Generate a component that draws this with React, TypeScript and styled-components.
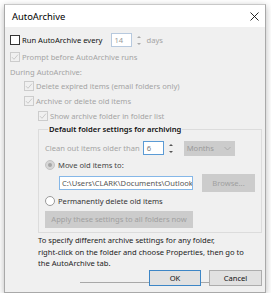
import React from 'react'
import styled, { createGlobalStyle } from 'styled-components'

const GlobalStyle = createGlobalStyle`
  html, body {
    margin: 0;
    padding: 0;
    background: #ffffff;
  }
  body {
    font-family: "Noto Sans", "Open Sans", sans-serif;
    font-size: 7.6px;
    color: #000;
  }
`

const Dialog = styled.div`
  margin: 4px 0 0 4px;
  width: 262px;
  height: 289px;
  box-sizing: border-box;
  border: 1px solid #a9a9a9;
  border-top-color: #c8c8c8;
  background: #f0f0f0;
  box-shadow: 0 2px 7px rgba(0, 0, 0, 0.28);
  display: flex;
  flex-direction: column;
`

const TitleBar = styled.div`
  height: 22px;
  background: #ffffff;
  display: flex;
  align-items: center;
  justify-content: space-between;
  padding: 0 6px 0 7px;
  font-size: 9.4px;
`

const Content = styled.div`
  padding: 5px 3px 0 5px;
  display: flex;
  flex-direction: column;
`

const Row = styled.div<{ $indent?: number; $h?: number }>`
  display: flex;
  align-items: center;
  height: ${(p) => p.$h ?? 15}px;
  padding-left: ${(p) => p.$indent ?? 0}px;
  flex-shrink: 0;
`

const Label = styled.span<{ $disabled?: boolean; $tone?: string }>`
  color: ${(p) => p.$tone ?? (p.$disabled ? '#a4a4a4' : '#111')};
  white-space: nowrap;
`

const Box = styled.span<{ $disabled?: boolean }>`
  width: 10px;
  height: 10px;
  box-sizing: border-box;
  border: 1px solid ${(p) => (p.$disabled ? '#cccccc' : '#333333')};
  background: ${(p) => (p.$disabled ? '#f0f0f0' : '#ffffff')};
  margin-right: 2px;
  display: flex;
  align-items: center;
  justify-content: center;
  flex-shrink: 0;
`

const Radio = styled.span<{ $checked?: boolean }>`
  width: 10px;
  height: 10px;
  box-sizing: border-box;
  border-radius: 50%;
  border: 1px solid ${(p) => (p.$checked ? '#c4c4c4' : '#9a9a9a')};
  background: ${(p) => (p.$checked ? '#d6d6d6' : '#ffffff')};
  margin-right: 3px;
  display: flex;
  align-items: center;
  justify-content: center;
  flex-shrink: 0;
  &::after {
    content: '';
    display: ${(p) => (p.$checked ? 'block' : 'none')};
    width: 4px;
    height: 4px;
    border-radius: 50%;
    background: #a6a6a6;
  }
`

const Spin = styled.div<{ $gap: number }>`
  display: flex;
  align-items: center;
  margin-left: ${(p) => p.$gap}px;
  height: 14px;
`

const SpinInput = styled.div<{ $border: string; $color: string }>`
  width: 21px;
  height: 14px;
  box-sizing: border-box;
  border: 1px solid ${(p) => p.$border};
  background: #ffffff;
  color: ${(p) => p.$color};
  padding-left: 3px;
  display: flex;
  align-items: center;
`

const SpinArrows = styled.div`
  margin-left: 3px;
  width: 8px;
  height: 14px;
  display: flex;
  flex-direction: column;
  align-items: center;
  justify-content: space-around;
`

const Arrow = styled.span<{ $down?: boolean; $color: string }>`
  width: 0;
  height: 0;
  border-left: 2px solid transparent;
  border-right: 2px solid transparent;
  ${(p) =>
    p.$down
      ? `border-top: 2px solid ${p.$color};`
      : `border-bottom: 2px solid ${p.$color};`}
`

const Group = styled.fieldset`
  margin: 0 0 0 28px;
  padding: 5px 0 4px 6px;
  border: 1px solid #dcdcdc;
  min-width: 0;
  display: flex;
  flex-direction: column;
`

const Legend = styled.legend`
  padding: 0 1px;
  margin-left: 3px;
  font-weight: 600;
  color: #111;
  line-height: 12px;
`

const Select = styled.div`
  margin-left: 9px;
  width: 51px;
  height: 15px;
  box-sizing: border-box;
  background: #cccccc;
  color: #9a9a9a;
  display: flex;
  align-items: center;
  justify-content: space-between;
  padding: 0 4px 0 3px;
`

const PathField = styled.div`
  width: 134px;
  height: 14px;
  box-sizing: border-box;
  border: 1px solid #85b7e8;
  background: #ffffff;
  color: #555;
  padding-left: 2px;
  display: flex;
  align-items: center;
  white-space: nowrap;
  overflow: hidden;
`

const GreyButton = styled.div<{ $w: number; $h: number; $gap?: number }>`
  width: ${(p) => p.$w}px;
  height: ${(p) => p.$h}px;
  margin-left: ${(p) => p.$gap ?? 0}px;
  box-sizing: border-box;
  background: #cccccc;
  color: #a0a0a0;
  display: flex;
  align-items: center;
  justify-content: center;
  white-space: nowrap;
`

const Note = styled.p`
  margin: 2px 0 0 28px;
  line-height: 11.5px;
  color: #222;
`

const Footer = styled.div`
  display: flex;
  justify-content: flex-end;
  gap: 8px;
  background: linear-gradient(#a8a8a8, #a8a8a8) no-repeat 70px 12px / calc(100% - 70px) 1px;
`

const Button = styled.div<{ $primary?: boolean }>`
  width: ${(p) => (p.$primary ? 52 : 53)}px;
  height: 16px;
  box-sizing: border-box;
  background: #e1e1e1;
  border: ${(p) => (p.$primary ? '1.5px solid #3d86c6' : '1px solid #adadad')};
  display: flex;
  align-items: center;
  justify-content: center;
  color: #111;
`

const Check = ({ color }: { color: string }) => (
  <svg width="8" height="8" viewBox="0 0 8 8">
    <path d="M1 4.2 L3 6.3 L7 1.6" fill="none" stroke={color} strokeWidth="0.9" />
  </svg>
)

const Chevron = () => (
  <svg width="7" height="5" viewBox="0 0 7 5">
    <path d="M0.5 1 L3.5 4 L6.5 1" fill="none" stroke="#a8a8a8" strokeWidth="0.9" />
  </svg>
)

const Close = () => (
  <svg width="9" height="9" viewBox="0 0 9 9">
    <path d="M0.5 0.5 L8.5 8.5 M8.5 0.5 L0.5 8.5" stroke="#111" strokeWidth="0.9" />
  </svg>
)

export default function App() {
  return (
    <>
      <GlobalStyle />
      <Dialog>
        <TitleBar>
          <span>AutoArchive</span>
          <Close />
        </TitleBar>
        <Content>
          <Row $h={16}>
            <Box />
            <Label>Run AutoArchive every</Label>
            <Spin $gap={8}>
              <SpinInput $border="#b7c9de" $color="#9a9a9a">14</SpinInput>
              <SpinArrows>
                <Arrow $color="#aaa" />
                <Arrow $down $color="#aaa" />
              </SpinArrows>
            </Spin>
            <Label $disabled style={{ marginLeft: 4 }}>days</Label>
          </Row>
          <Row $h={18}>
            <Box $disabled>
              <Check color="#c4c4c4" />
            </Box>
            <Label $disabled>Prompt before AutoArchive runs</Label>
          </Row>
          <Row $h={12}>
            <Label $disabled>During AutoArchive:</Label>
          </Row>
          <Row $indent={14}>
            <Box $disabled>
              <Check color="#c4c4c4" />
            </Box>
            <Label $disabled>Delete expired items (email folders only)</Label>
          </Row>
          <Row $indent={14}>
            <Box $disabled>
              <Check color="#c4c4c4" />
            </Box>
            <Label $disabled>Archive or delete old items</Label>
          </Row>
          <Row $indent={28}>
            <Box $disabled>
              <Check color="#c4c4c4" />
            </Box>
            <Label $disabled>Show archive folder in folder list</Label>
          </Row>
          <Group>
            <Legend>Default folder settings for archiving</Legend>
            <Row $h={16}>
              <Label $disabled>Clean out items older than</Label>
              <Spin $gap={3}>
                <SpinInput $border="#5b9bd5" $color="#777">6</SpinInput>
                <SpinArrows>
                  <Arrow $color="#555" />
                  <Arrow $down $color="#555" />
                </SpinArrows>
              </Spin>
              <Select>
                <span>Months</span>
                <Chevron />
              </Select>
            </Row>
            <Row $h={18}>
              <Radio $checked />
              <Label $tone="#444">Move old items to:</Label>
            </Row>
            <Row $h={18} $indent={14}>
              <PathField>C:\Users\CLARK\Documents\Outlook</PathField>
              <GreyButton $w={53} $h={18} $gap={9}>Browse...</GreyButton>
            </Row>
            <Row $h={18}>
              <Radio />
              <Label $tone="#333">Permanently delete old items</Label>
            </Row>
            <Row $h={18}>
              <GreyButton $w={148} $h={17}>Apply these settings to all folders now</GreyButton>
            </Row>
          </Group>
          <Note>
            To specify different archive settings for any folder,
            <br />
            right-click on the folder and choose Properties, then go to
            <br />
            the AutoArchive tab.
          </Note>
          <Footer>
            <Button $primary>OK</Button>
            <Button>Cancel</Button>
          </Footer>
        </Content>
      </Dialog>
    </>
  )
}
